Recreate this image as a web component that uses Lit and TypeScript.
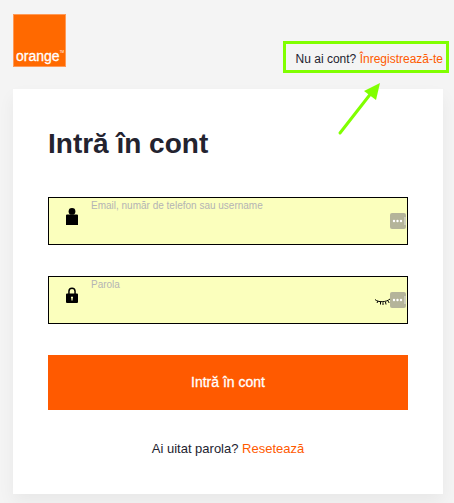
import { LitElement, html, css, svg } from "lit";
import { customElement } from "lit/decorators.js";

const dots = svg`<svg class="dots" width="16" height="16" viewBox="0 0 16 16"><rect width="16" height="16" rx="2" fill="#b4b49a"/><circle cx="4" cy="8" r="1.2" fill="#fff"/><circle cx="7.5" cy="8" r="1.2" fill="#fff"/><circle cx="11" cy="8" r="1.2" fill="#fff"/><rect x="14.5" y="4" width="1" height="8" fill="#fff" opacity=".7"/></svg>`;

@customElement("app-root")
export class AppRoot extends LitElement {
  static styles = css`
    :host { display: block; width: 454px; height: 503px; position: relative; overflow: hidden; background: #f4f4f4; font-family: "Liberation Sans", Arial, sans-serif; color: #23232f; }
    .head { display: flex; justify-content: space-between; align-items: flex-start; padding: 14px 5px 0 13px; height: 89px; box-sizing: border-box; }
    .logo { width: 53px; height: 53px; background: #ff6900; border: 1px solid #ff9a57; box-sizing: border-box; position: relative; color: #fff; display: flex; align-items: flex-end; padding: 0 0 2px 2px; font-size: 14px; font-weight: 400; line-height: 15px; -webkit-text-stroke: 0.3px #fff; }
    .logo sup { position: absolute; font-size: 3px; line-height: 4px; right: 1px; bottom: 12px; font-weight: 400; -webkit-text-stroke: 0; }
    .reg { margin-top: 27px; width: 166px; height: 32px; box-sizing: border-box; border: 3px solid #80ff00; font-size: 12px; display: flex; align-items: center; justify-content: flex-end; padding: 4px 3px 0 0; white-space: nowrap; }
    a { color: #ff5a00; text-decoration: none; }
    .card { margin: 0 11px 0 13px; height: 405px; background: #fff; box-shadow: 0 8px 16px rgba(0,0,0,.05); padding: 36px 35px 0; box-sizing: border-box; }
    h1 { margin: 0; font-size: 28px; line-height: 38px; font-weight: 700; height: 38px; color: #23232f; }
    .form { margin-top: 34px; display: flex; flex-direction: column; gap: 31px; }
    .field { height: 48px; box-sizing: border-box; background: #fbffbd; border: 1px solid #000; position: relative; display: grid; grid-template-columns: 42px 1fr 17px; }
    .ico { display: flex; justify-content: center; margin-left: 4px; padding-top: 10px; }
    .lbl { font-size: 10px; color: #b4b4b4; line-height: 12px; padding-top: 2px; }
    .dots { margin-top: 15px; display: block; }
    .eye { position: absolute; left: 326px; top: 21px; }
    button { display: block; width: 100%; height: 55px; margin-top: 31px; border: 0; background: #ff5a00; color: #fff; font: 400 14px/55px "Liberation Sans", Arial, sans-serif; -webkit-text-stroke: 0.3px #fff; padding: 0; }
    .foot { margin-top: 31px; text-align: center; font-size: 13px; line-height: 16px; }
    .arrow { position: absolute; left: 335px; top: 78px; }
  `;
  render() {
    return html`
      <div class="head">
        <div class="logo">orange<sup>TM</sup></div>
        <div class="reg"><span>Nu ai cont? <a href="#">Înregistrează-te</a></span></div>
      </div>
      <div class="card">
        <h1>Intră în cont</h1>
        <div class="form">
          <div class="field">
            <div class="ico"><svg width="12" height="17" viewBox="0 0 12 17"><circle cx="6" cy="3.4" r="3.4" fill="#000"/><path d="M1 6.5h10a1 1 0 0 1 1 1V17H0V7.5a1 1 0 0 1 1-1z" fill="#000"/></svg></div>
            <div class="lbl">Email, număr de telefon sau username</div>
            ${dots}
          </div>
          <div class="field">
            <div class="ico"><svg width="12" height="16" viewBox="0 0 12 16"><path fill-rule="evenodd" d="M2.2 6.5V4.2a3.8 3.8 0 0 1 7.6 0V6.5h1.2a1 1 0 0 1 1 1V15a1 1 0 0 1-1 1H1a1 1 0 0 1-1-1V7.5a1 1 0 0 1 1-1zM3.7 6.5h4.6V4.2a2.3 2.3 0 0 0-4.6 0zM6 9.5a1.1 1.1 0 0 0-.6 2V13.5h1.2V11.5A1.1 1.1 0 0 0 6 9.5z" fill="#000"/></svg></div>
            <div class="lbl">Parola</div>
            ${dots}
            <svg class="eye" width="16" height="8" viewBox="0 0 16 8"><path d="M0 1.5C3 4.5 11 4.5 15 1M3 3l-1 2M5.5 4v2.5M8 4.3V7M10.5 4l.5 2.5M13 3l1.2 2" fill="none" stroke="#000" stroke-width="1"/></svg>
          </div>
        </div>
        <button>Intră în cont</button>
        <div class="foot">Ai uitat parola? <a href="#">Resetează</a></div>
      </div>
      <svg class="arrow" width="50" height="60" viewBox="0 0 50 60"><path d="M5 55L37 14" stroke="#80ff00" stroke-width="3" stroke-linecap="round"/><path d="M45 5L29 13L41 22Z" fill="#80ff00"/></svg>
    `;
  }
}
